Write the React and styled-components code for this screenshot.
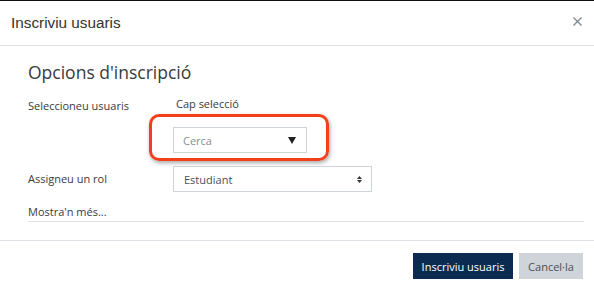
import React from "react";
import styled, { createGlobalStyle } from "styled-components";

const Global = createGlobalStyle`
  html, body { margin: 0; padding: 0; background: #fff; }
  body { width: 594px; height: 291px; overflow: hidden; }
`;

const Dialog = styled.div`
  width: 594px;
  height: 291px;
  box-sizing: border-box;
  border-top: 1px solid #111;
  display: flex;
  flex-direction: column;
  font-family: "Open Sans", "Noto Sans", sans-serif;
  color: #373a3c;
`;

const Header = styled.div`
  height: 45px;
  flex: none;
  box-sizing: border-box;
  border-bottom: 1px solid #dee2e6;
  display: flex;
  align-items: center;
  justify-content: space-between;
  padding: 0 12px 0 11px;
`;

const Title = styled.h5`
  margin: 0;
  font-family: "Liberation Sans", Arial, sans-serif;
  font-size: 15.3px;
  font-weight: 400;
  line-height: 20px;
  color: #333;
`;

const Close = styled.button`
  align-self: flex-start;
  margin-top: 16px;
  border: 0;
  background: none;
  padding: 0;
  width: 9px;
  height: 9px;
  display: flex;
  cursor: pointer;
`;

const Body = styled.div`
  height: 195px;
  flex: none;
  padding: 14px 10px 0 28px;
  box-sizing: border-box;
  border-bottom: 1px solid #dee2e6;
`;

const Heading = styled.h4`
  margin: 0 0 12px 0;
  font-size: 17.5px;
  font-weight: 400;
  color: #373a3c;
  line-height: 24px;
`;

const Form = styled.div`
  display: grid;
  grid-template-columns: 145px 1fr;
  font-size: 11px;
`;

const Label = styled.div`
  color: #373a3c;
  line-height: 16px;
  padding-top: ${(p) => p.$pt || 0}px;
  align-self: ${(p) => p.$align || "start"};
  margin-top: ${(p) => p.$mt || 0}px;
`;

const Field = styled.div`
  display: flex;
  flex-direction: column;
  align-items: flex-start;
  margin-top: ${(p) => p.$mt || 0}px;
`;

const Static = styled.div`
  line-height: 16px;
  padding-left: 3px;
`;

const Highlight = styled.div`
  margin: 2px 0 0 -24px;
  padding: 10px 19px 5px 21px;
  border: 3px solid #f2401c;
  border-radius: 10px;
  box-shadow: 1px 2px 4px rgba(0, 0, 0, 0.35);
`;

const Select = styled.div`
  width: ${(p) => p.$w}px;
  height: 26px;
  box-sizing: border-box;
  border: 1px solid #ced4da;
  display: flex;
  align-items: center;
  justify-content: space-between;
  padding: 0 ${(p) => p.$pr}px 0 ${(p) => p.$pl}px;
  color: ${(p) => (p.$muted ? "#868e96" : "#495057")};
  background: #fff;
`;

const More = styled.div`
  grid-column: 1 / -1;
  margin-top: 12px;
  border-bottom: 1px solid #dee2e6;
  line-height: 16px;
  padding-bottom: 1px;
  color: #373a3c;
`;

const Footer = styled.div`
  flex: 1;
  display: flex;
  justify-content: flex-end;
  align-items: flex-start;
  padding: 12px 11px 0 0;
  box-sizing: border-box;
  gap: 6px;
`;

const Button = styled.button`
  height: 26px;
  width: ${(p) => p.$w}px;
  border: 0;
  border-radius: 0;
  font-family: "Open Sans", "Noto Sans", sans-serif;
  font-size: 11px;
  padding: 0;
  background: ${(p) => (p.$primary ? "#0b2c50" : "#ced4da")};
  color: ${(p) => (p.$primary ? "#fff" : "#495057")};
`;

export default function App() {
  return (
    <>
      <Global />
      <Dialog>
        <Header>
          <Title>Inscriviu usuaris</Title>
          <Close aria-label="Tanca">
            <svg width="9" height="9" viewBox="0 0 9 9">
              <path d="M0.5 0.5 L8.5 8.5 M8.5 0.5 L0.5 8.5" stroke="#7d8b98" strokeWidth="1.4" />
            </svg>
          </Close>
        </Header>
        <Body>
          <Heading>Opcions d'inscripció</Heading>
          <Form>
            <Label $pt={2}>Seleccioneu usuaris</Label>
            <Field>
              <Static>Cap selecció</Static>
              <Highlight>
                <Select $w={134} $pl={9} $pr={10} $muted>
                  <span>Cerca</span>
                  <svg width="8" height="7" viewBox="0 0 8 7">
                    <path d="M0 0 H8 L4 7 Z" fill="#222" />
                  </svg>
                </Select>
              </Highlight>
            </Field>
            <Label $align="center" $mt={5}>Assigneu un rol</Label>
            <Field $mt={5}>
              <Select $w={199} $pl={10} $pr={9}>
                <span>Estudiant</span>
                <svg width="5" height="7" viewBox="0 0 5 7">
                  <path d="M0 3 L2.5 0 L5 3 Z M0 4 L2.5 7 L5 4 Z" fill="#333" />
                </svg>
              </Select>
            </Field>
            <More>Mostra'n més...</More>
          </Form>
        </Body>
        <Footer>
          <Button $primary $w={100}>Inscriviu usuaris</Button>
          <Button $w={64}>Cancel·la</Button>
        </Footer>
      </Dialog>
    </>
  );
}
